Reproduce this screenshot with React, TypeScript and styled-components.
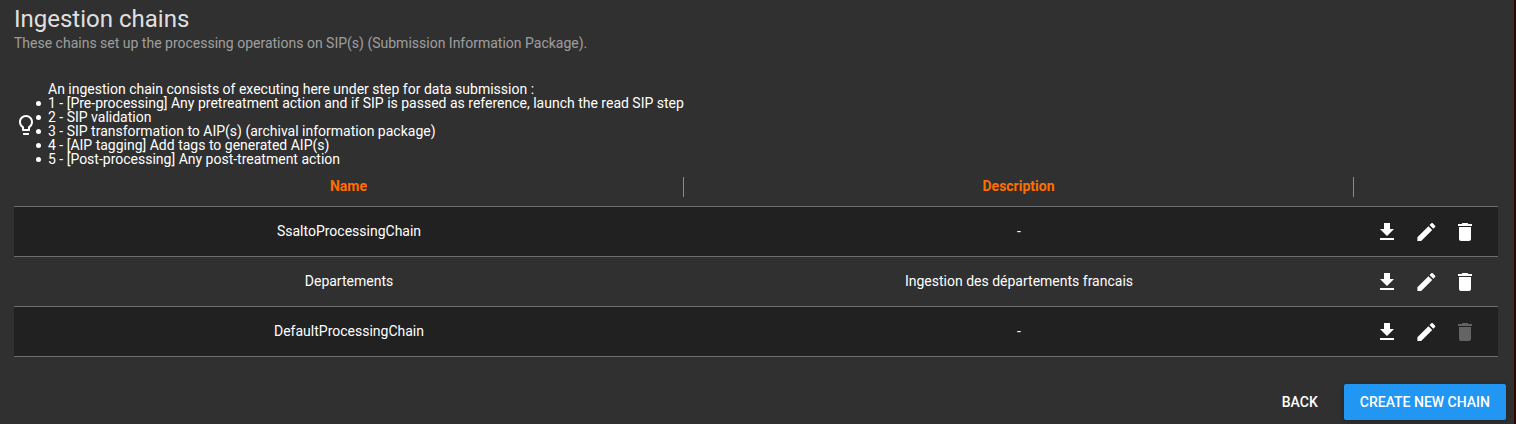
import React from "react";
import styled, { createGlobalStyle } from "styled-components";

const GlobalStyle = createGlobalStyle`
  * { box-sizing: border-box; }
  body { margin: 0; background: #303030; font-family: Roboto, sans-serif; font-size: 14px; color: #fff; }
`;

const Page = styled.main`
  height: 424px;
  padding: 0 10px 0 14px;
  border-right: 2px solid #2b0700;
  overflow: hidden;
  display: flex;
  flex-direction: column;
`;
const Title = styled.h1`
  margin: 0;
  padding-top: 1px;
  height: 36px;
  font-size: 24px;
  font-weight: 400;
  line-height: 36px;
  color: rgba(255, 255, 255, 0.87);
`;
const Subtitle = styled.p`
  margin: 0;
  height: 46px;
  line-height: 15px;
  color: rgba(255, 255, 255, 0.54);
`;
const Help = styled.section`
  display: flex;
  align-items: center;
  height: 84px;
`;
const Bulb = styled.svg`
  width: 24px;
  height: 24px;
  flex: none;
  margin-top: 2px;
  fill: #fff;
`;
const Steps = styled.ul`
  margin: 0;
  padding: 0;
  line-height: 14px;
  list-style: none;
`;
const Intro = styled.div`
  padding-left: 10px;
`;
const Step = styled.li`
  display: flex;
  align-items: flex-start;
  gap: 7px;
  margin-left: -2px;

  &::before {
    content: "";
    width: 5px;
    height: 5px;
    margin-top: 5px;
    border-radius: 50%;
    background: #fff;
  }
`;

const Table = styled.div`
  width: 1484px;
`;
const Row = styled.div<{ $dark?: boolean }>`
  display: grid;
  grid-template-columns: 670px 670px 144px;
  height: 50px;
  align-items: center;
  text-align: center;
  background: ${(p) => (p.$dark ? "#212121" : "transparent")};
  border-bottom: 1px solid #6e6e6e;
`;
const HeaderRow = styled(Row)`
  height: 41px;
  padding-top: 2px;
  color: #ff6e00;
  font-weight: 700;
`;
const HeaderCell = styled.div<{ $divided?: boolean }>`
  height: 20px;
  line-height: 18px;
  border-right: ${(p) => (p.$divided ? "1px solid #8a8a8a" : "0")};
`;
const Cell = styled.div`
  padding-bottom: 2px;
`;
const Actions = styled.div`
  display: flex;
  gap: 15px;
  padding-left: 21px;
`;
const ActionIcon = styled.svg<{ $disabled?: boolean }>`
  width: 24px;
  height: 24px;
  fill: ${(p) => (p.$disabled ? "#646464" : "#fff")};
`;
const Footer = styled.footer`
  display: flex;
  justify-content: flex-end;
  gap: 10px;
  margin-top: 27px;
  margin-right: -2px;
`;
const Button = styled.button<{ $primary?: boolean }>`
  height: 36px;
  padding: 0 16px;
  border: 0;
  border-radius: 2px;
  font: 500 14px/36px Roboto, sans-serif;
  color: #fff;
  white-space: nowrap;
  background: ${(p) => (p.$primary ? "#2196f3" : "transparent")};
  box-shadow: ${(p) => (p.$primary ? "0 1px 6px rgba(0,0,0,.12), 0 1px 4px rgba(0,0,0,.12)" : "none")};
`;

const steps = [
  "1 - [Pre-processing] Any pretreatment action and if SIP is passed as reference, launch the read SIP step",
  "2 - SIP validation",
  "3 - SIP transformation to AIP(s) (archival information package)",
  "4 - [AIP tagging] Add tags to generated AIP(s)",
  "5 - [Post-processing] Any post-treatment action",
];
const chains = [
  { name: "SsaltoProcessingChain", description: "-", removable: true },
  { name: "Departements", description: "Ingestion des départements francais", removable: true },
  { name: "DefaultProcessingChain", description: "-", removable: false },
];

export default function App() {
  return (
    <Page>
      <GlobalStyle />
      <Title>Ingestion chains</Title>
      <Subtitle>These chains set up the processing operations on SIP(s) (Submission Information Package).</Subtitle>
      <Help>
        <Bulb viewBox="0 0 24 24">
          <path d="M9 21c0 .55.45 1 1 1h4c.55 0 1-.45 1-1v-1H9v1zm3-19C8.14 2 5 5.14 5 9c0 2.38 1.19 4.47 3 5.74V17c0 .55.45 1 1 1h6c.55 0 1-.45 1-1v-2.26c1.81-1.27 3-3.36 3-5.74 0-3.86-3.14-7-7-7zm2.85 11.1l-.85.6V16h-4v-2.3l-.85-.6C7.8 12.16 7 10.63 7 9c0-2.76 2.24-5 5-5s5 2.24 5 5c0 1.63-.8 3.16-2.15 4.1z" />
        </Bulb>
        <Steps>
          <Intro>An ingestion chain consists of executing here under step for data submission :</Intro>
          {steps.map((s) => <Step key={s}>{s}</Step>)}
        </Steps>
      </Help>
      <Table>
        <HeaderRow>
          <HeaderCell $divided>Name</HeaderCell>
          <HeaderCell $divided>Description</HeaderCell>
          <HeaderCell />
        </HeaderRow>
        {chains.map((c, i) => (
          <Row key={c.name} $dark={i % 2 === 0}>
            <Cell>{c.name}</Cell>
            <Cell>{c.description}</Cell>
            <Actions>
              <ActionIcon viewBox="0 0 24 24"><path d="M19 9h-4V3H9v6H5l7 7 7-7zM5 18v2h14v-2H5z" /></ActionIcon>
              <ActionIcon viewBox="-0.4 0 24 24"><path d="M3 17.25V21h3.75L17.81 9.94l-3.75-3.75L3 17.25zM20.71 7.04c.39-.39.39-1.02 0-1.41l-2.34-2.34c-.39-.39-1.02-.39-1.41 0l-1.83 1.83 3.75 3.75 1.83-1.83z" /></ActionIcon>
              <ActionIcon viewBox="0 0 24 24" $disabled={!c.removable}><path d="M6 19c0 1.1.9 2 2 2h8c1.1 0 2-.9 2-2V7H6v12zM19 4h-3.5l-1-1h-5l-1 1H5v2h14V4z" /></ActionIcon>
            </Actions>
          </Row>
        ))}
      </Table>
      <Footer>
        <Button>BACK</Button>
        <Button $primary>CREATE NEW CHAIN</Button>
      </Footer>
    </Page>
  );
}
